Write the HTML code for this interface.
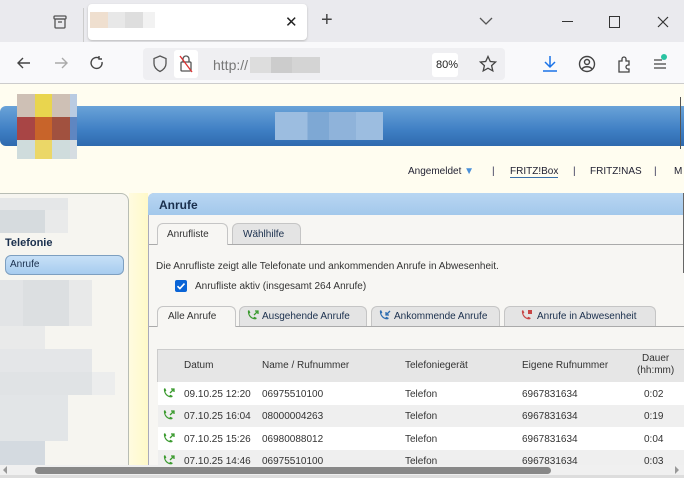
<!DOCTYPE html><html><head><meta charset="utf-8"><style>
*{box-sizing:border-box;margin:0;padding:0}
body{width:684px;height:478px;overflow:hidden;position:relative;font-family:"Liberation Sans",sans-serif;background:#fffdf0}
.a{position:absolute}
.t{font-size:10px;color:#333;white-space:nowrap}
</style></head><body>
<svg width="0" height="0" style="position:absolute"><defs>
<symbol id="ph" viewBox="0 0 14 14"><path d="M2 2.5c0-.8.7-1.3 1.4-1.1l1.3 2.4-1.2 1.3c.7 1.9 2.2 3.5 4.2 4.4l1.3-1.2 2.4 1.3c.2.8-.3 1.4-1.1 1.5C5.6 11.3 2 7.5 2 2.5z" fill="currentColor"/></symbol>
</defs></svg>
<!-- tab bar -->
<div class="a" style="left:0;top:0;width:684px;height:42px;background:#eaeaee"></div>
<div class="a" style="left:83px;top:8px;width:1px;height:34px;background:#ccc"></div>
<svg class="a" style="left:52px;top:14px" width="16" height="16" viewBox="0 0 16 16" fill="none" stroke="#555" stroke-width="1.3"><rect x="2" y="2" width="12" height="3" rx="1"/><rect x="3" y="5" width="10" height="9" rx="1"/><path d="M6 8h4"/></svg>
<div class="a" style="left:88px;top:4px;width:219px;height:36px;background:#fff;border-radius:4px;box-shadow:0 1px 2px #bbb"></div>
<div class="a" style="left:90px;top:12px;width:18px;height:16px;background:#efdfcf"></div>
<div class="a" style="left:108px;top:12px;width:17px;height:16px;background:#e8e8e8"></div>
<div class="a" style="left:125px;top:12px;width:18px;height:16px;background:#dedede"></div>
<div class="a" style="left:143px;top:12px;width:12px;height:16px;background:#f2f2f2"></div>
<div class="a t" style="left:285px;top:13px;font-size:15px;color:#222">✕</div>
<div class="a t" style="left:321px;top:9px;font-size:20px;color:#444">+</div>
<svg class="a" style="left:479px;top:16px" width="14" height="10"><path d="M1 2l6 6 6-6" stroke="#555" fill="none" stroke-width="1.3"/></svg>
<div class="a" style="left:562px;top:21px;width:11px;height:1px;background:#333"></div>
<div class="a" style="left:609px;top:16px;width:11px;height:12px;border:1.2px solid #333"></div>
<svg class="a" style="left:657px;top:16px" width="12" height="12"><path d="M1 1l10 10M11 1L1 11" stroke="#333" stroke-width="1.2"/></svg>
<!-- nav bar -->
<div class="a" style="left:0;top:42px;width:684px;height:42px;background:#f9f9fb;border-bottom:1px solid #ccc"></div>
<svg class="a" style="left:16px;top:55px" width="16" height="16" fill="none" stroke="#444" stroke-width="1.4"><path d="M14 8H2M7 3L2 8l5 5"/></svg>
<svg class="a" style="left:53px;top:55px" width="16" height="16" fill="none" stroke="#aaa" stroke-width="1.4"><path d="M2 8h12M9 3l5 5-5 5"/></svg>
<svg class="a" style="left:89px;top:55px" width="16" height="16" fill="none" stroke="#444" stroke-width="1.4"><path d="M13 7A5.5 5.5 0 1 1 10 3M10 1v3h3"/></svg>
<div class="a" style="left:143px;top:48px;width:362px;height:32px;background:#efeff2;border-radius:4px"></div>
<svg class="a" style="left:152px;top:55px" width="16" height="18" fill="none" stroke="#555" stroke-width="1.3"><path d="M8 1L2 3.5v5c0 4 3 6.5 6 8 3-1.5 6-4 6-8v-5z"/></svg>
<div class="a" style="left:174px;top:50px;width:24px;height:28px;background:#fff;border-radius:3px"></div>
<svg class="a" style="left:178px;top:54px" width="16" height="20" fill="none" stroke="#555" stroke-width="1.3"><rect x="3" y="8" width="10" height="9" rx="1"/><path d="M5 8V5a3 3 0 0 1 6 0v3"/><path d="M2 2l12 16" stroke="#d33"/></svg>
<div class="a t" style="left:213px;top:57px;font-size:14px;color:#777">http://</div>
<div class="a" style="left:250px;top:57px;width:70px;height:16px;background:linear-gradient(90deg,#ddd 0 30%,#ccc 30% 60%,#d4d4d4 60%)"></div>
<div class="a" style="left:432px;top:53px;width:26px;height:24px;background:#fff;border-radius:3px"></div>
<div class="a t" style="left:436px;top:59px;font-size:11px;color:#222">80%</div>
<svg class="a" style="left:479px;top:55px" width="18" height="18" fill="none" stroke="#444" stroke-width="1.3"><path d="M9 1.5l2.3 5 5.3.5-4 3.6 1.2 5.3L9 13.2 4.2 15.9l1.2-5.3-4-3.6 5.3-.5z"/></svg>
<svg class="a" style="left:541px;top:54px" width="18" height="20" fill="none" stroke="#1a73e8" stroke-width="1.5"><path d="M9 2v11M4 8l5 5 5-5M2 17h14"/></svg>
<svg class="a" style="left:578px;top:55px" width="18" height="18" fill="none" stroke="#444" stroke-width="1.4"><circle cx="9" cy="9" r="7.5"/><circle cx="9" cy="7" r="2.5"/><path d="M4 14c2-3 8-3 10 0"/></svg>
<svg class="a" style="left:616px;top:55px" width="16" height="18" fill="none" stroke="#444" stroke-width="1.3"><path d="M3 6h3V4a2 2 0 0 1 4 0v2h3v4h-1a2 2 0 0 0 0 4h1v3H3z"/></svg>
<svg class="a" style="left:652px;top:55px" width="18" height="16" fill="none" stroke="#444" stroke-width="1.3"><path d="M2 5h8M2 9h12M2 13h12"/></svg>
<div class="a" style="left:661px;top:54px;width:6px;height:6px;border-radius:50%;background:#2ac3a2"></div>
<!-- banner -->
<div class="a" style="left:0;top:106px;width:684px;height:40px;background:linear-gradient(#6aa3d8,#3f7fc4 60%,#2f6aae);border-radius:6px 0 0 6px"></div>
<div class="a" style="left:275px;top:112px;width:108px;height:28px;background:linear-gradient(90deg,#9cbde0 0 30%,#7ea8d4 30% 50%,#8fb3da 50% 75%,#9cbde0 75%)"></div>
<div class="a" style="left:17px;top:94px;width:60px;height:65px;display:grid;grid-template-columns:18px 17px 18px 7px;grid-template-rows:23px 23px 19px">
<div style="background:#cec0b5"></div><div style="background:#e9d54e"></div><div style="background:#cec0b5"></div><div style="background:#b9cbe2"></div>
<div style="background:#a84545"></div><div style="background:#c8642a"></div><div style="background:#a1513f"></div><div style="background:#5f86c1"></div>
<div style="background:#cfdcdc"></div><div style="background:#ebd767"></div><div style="background:#cfdcdc"></div><div style="background:#d6dde2"></div></div>
<div class="a" style="left:680px;top:97px;width:1px;height:52px;background:#555"></div>
<div class="a t" style="left:408px;top:166px;font-size:10px;color:#223">Angemeldet <span style="color:#4a90d9">▼</span></div>
<div class="a t" style="left:492px;top:166px;color:#335">|</div>
<div class="a t" style="left:510px;top:166px;color:#223;border-bottom:1px solid #3a6fa8">FRITZ!Box</div>
<div class="a t" style="left:573px;top:166px;color:#335">|</div>
<div class="a t" style="left:590px;top:166px;color:#223">FRITZ!NAS</div>
<div class="a t" style="left:654px;top:166px;color:#335">|</div>
<div class="a t" style="left:674px;top:166px;color:#223">M</div>
<!-- sidebar -->
<div class="a" style="left:129px;top:193px;width:19px;height:273px;background:linear-gradient(90deg,#fffbe0,#fff9c8)"></div>
<div class="a" style="left:-4px;top:193px;width:133px;height:285px;background:#f6f5f0;border:1px solid #b8bdb4;border-radius:0 8px 0 0"></div>
<div class="a" style="left:0;top:198px;width:68px;height:12px;background:#e5e7e8"></div>
<div class="a" style="left:0;top:210px;width:45px;height:23px;background:#d6dbde"></div>
<div class="a" style="left:45px;top:210px;width:23px;height:23px;background:#e9eaea"></div>
<div class="a t" style="left:5px;top:237px;font-size:11px;font-weight:bold;color:#1a2f4d">Telefonie</div>
<div class="a" style="left:5px;top:255px;width:119px;height:20px;background:linear-gradient(#c7e0f7,#a7ccef);border:1px solid #7d9fc0;border-radius:6px"></div>
<div class="a t" style="left:10px;top:259px;color:#1a2f4d">Anrufe</div>
<div class="a" style="left:0;top:280px;width:92px;height:46px;background:linear-gradient(90deg,#e2e4e6 0 25%,#dcdfe1 25% 75%,#e8e9e9 75%)"></div>
<div class="a" style="left:0;top:326px;width:45px;height:23px;background:#e9eaea"></div>
<div class="a" style="left:0;top:349px;width:92px;height:23px;background:#e4e6e8"></div>
<div class="a" style="left:0;top:372px;width:115px;height:23px;background:linear-gradient(90deg,#e0e3e5 0 80%,#eceded 80%)"></div>
<div class="a" style="left:0;top:395px;width:68px;height:46px;background:#e2e5e7"></div>
<div class="a" style="left:0;top:441px;width:45px;height:24px;background:#d4dae0"></div>
<!-- main panel -->
<div class="a" style="left:148px;top:193px;width:540px;height:280px;background:#f7f6f3;border:1px solid #aab;border-radius:6px 0 0 0"></div>
<div class="a" style="left:148px;top:193px;width:536px;height:22px;background:linear-gradient(#b8d6f2,#a3c8eb);border-radius:6px 0 0 0"></div>
<div class="a t" style="left:159px;top:198px;font-size:12px;font-weight:bold;color:#1a2f4d">Anrufe</div>
<div class="a" style="left:149px;top:244px;width:535px;height:1px;background:#aaa"></div>
<div class="a" style="left:157px;top:223px;width:71px;height:22px;background:#f7f6f3;border:1px solid #c5c5c5;border-bottom:none;border-radius:6px 6px 0 0"></div>
<div class="a t" style="left:167px;top:229px;color:#333">Anrufliste</div>
<div class="a" style="left:232px;top:223px;width:69px;height:21px;background:#e4e4e4;border:1px solid #c5c5c5;border-bottom:none;border-radius:6px 6px 0 0"></div>
<div class="a t" style="left:243px;top:229px;color:#1a2f4d">Wählhilfe</div>
<div class="a t" style="left:156px;top:261px;color:#333">Die Anrufliste zeigt alle Telefonate und ankommenden Anrufe in Abwesenheit.</div>
<div class="a" style="left:175px;top:280px;width:12px;height:12px;background:#0a64d6;border-radius:2px"></div>
<svg class="a" style="left:175px;top:280px" width="12" height="12"><path d="M2.5 6.2l2.4 2.4 4.6-5" stroke="#fff" stroke-width="1.6" fill="none"/></svg>
<div class="a t" style="left:195px;top:281px;color:#333">Anrufliste aktiv (insgesamt 264 Anrufe)</div>
<div class="a" style="left:149px;top:326px;width:535px;height:1px;background:#aaa"></div>
<div class="a" style="left:157px;top:306px;width:79px;height:21px;background:#f7f6f3;border:1px solid #c5c5c5;border-bottom:none;border-radius:6px 6px 0 0"></div>
<div class="a t" style="left:168px;top:311px;color:#333">Alle Anrufe</div>
<div class="a" style="left:239px;top:306px;width:128px;height:20px;background:#e4e4e4;border:1px solid #c5c5c5;border-bottom:none;border-radius:6px 6px 0 0"></div>
<svg class="a" style="left:246px;top:309px;color:#3a9a2e" width="13" height="13"><use href="#ph"/><path d="M8 6l4-4M9 2h3v3" stroke="#3a9a2e" stroke-width="1.3" fill="none"/></svg>
<div class="a t" style="left:262px;top:311px;color:#1a2f4d">Ausgehende Anrufe</div>
<div class="a" style="left:371px;top:306px;width:129px;height:20px;background:#e4e4e4;border:1px solid #c5c5c5;border-bottom:none;border-radius:6px 6px 0 0"></div>
<svg class="a" style="left:378px;top:309px;color:#2c6cb0" width="13" height="13"><use href="#ph"/><path d="M12 2L8 6M8 3v3h3" stroke="#2c6cb0" stroke-width="1.3" fill="none"/></svg>
<div class="a t" style="left:394px;top:311px;color:#1a2f4d">Ankommende Anrufe</div>
<div class="a" style="left:504px;top:306px;width:152px;height:20px;background:#e4e4e4;border:1px solid #c5c5c5;border-bottom:none;border-radius:6px 6px 0 0"></div>
<svg class="a" style="left:520px;top:309px;color:#c84545" width="13" height="13"><use href="#ph"/><rect x="8" y="1" width="4" height="4" fill="#c84545"/></svg>
<div class="a t" style="left:537px;top:311px;color:#1a2f4d">Anrufe in Abwesenheit</div>
<!-- table -->
<div class="a" style="left:157px;top:349px;width:527px;height:33px;background:#e6e6e6;border-top:1px solid #ccc;border-left:1px solid #ccc"></div>
<div class="a t" style="left:184px;top:360px">Datum</div>
<div class="a t" style="left:262px;top:360px">Name / Rufnummer</div>
<div class="a t" style="left:405px;top:360px">Telefoniegerät</div>
<div class="a t" style="left:522px;top:360px">Eigene Rufnummer</div>
<div class="a t" style="left:637px;top:353px;text-align:center;line-height:12px">Dauer<br>(hh:mm)</div>
<div class="a" style="left:158px;top:382px;width:526px;height:23px;background:#fff"></div>
<div class="a" style="left:158px;top:405px;width:526px;height:22px;background:#efefef"></div>
<div class="a" style="left:158px;top:427px;width:526px;height:23px;background:#fff"></div>
<div class="a" style="left:158px;top:450px;width:526px;height:16px;background:#efefef"></div>
<svg class="a" style="left:162px;top:387px;color:#3a9a2e" width="13" height="13"><use href="#ph"/><path d="M8 6l4-4M9 2h3v3" stroke="#3a9a2e" stroke-width="1.3" fill="none"/></svg>
<div class="a t" style="left:184px;top:389px">09.10.25 12:20</div><div class="a t" style="left:262px;top:389px">06975510100</div><div class="a t" style="left:405px;top:389px">Telefon</div><div class="a t" style="left:522px;top:389px">6967831634</div><div class="a t" style="left:644px;top:389px">0:02</div>
<svg class="a" style="left:162px;top:409px;color:#3a9a2e" width="13" height="13"><use href="#ph"/><path d="M8 6l4-4M9 2h3v3" stroke="#3a9a2e" stroke-width="1.3" fill="none"/></svg>
<div class="a t" style="left:184px;top:411px">07.10.25 16:04</div><div class="a t" style="left:262px;top:411px">08000004263</div><div class="a t" style="left:405px;top:411px">Telefon</div><div class="a t" style="left:522px;top:411px">6967831634</div><div class="a t" style="left:644px;top:411px">0:19</div>
<svg class="a" style="left:162px;top:432px;color:#3a9a2e" width="13" height="13"><use href="#ph"/><path d="M8 6l4-4M9 2h3v3" stroke="#3a9a2e" stroke-width="1.3" fill="none"/></svg>
<div class="a t" style="left:184px;top:434px">07.10.25 15:26</div><div class="a t" style="left:262px;top:434px">06980088012</div><div class="a t" style="left:405px;top:434px">Telefon</div><div class="a t" style="left:522px;top:434px">6967831634</div><div class="a t" style="left:644px;top:434px">0:04</div>
<svg class="a" style="left:162px;top:454px;color:#3a9a2e" width="13" height="13"><use href="#ph"/><path d="M8 6l4-4M9 2h3v3" stroke="#3a9a2e" stroke-width="1.3" fill="none"/></svg>
<div class="a t" style="left:184px;top:456px">07.10.25 14:46</div><div class="a t" style="left:262px;top:456px">06975510100</div><div class="a t" style="left:405px;top:456px">Telefon</div><div class="a t" style="left:522px;top:456px">6967831634</div><div class="a t" style="left:644px;top:456px">0:03</div>
<div class="a" style="left:683px;top:193px;width:1px;height:80px;background:#666"></div>
<!-- scrollbar -->
<div class="a" style="left:0;top:465px;width:684px;height:13px;background:#f0f0f0;border-bottom:3px solid #ddd"></div>
<div class="a" style="left:35px;top:467px;width:516px;height:7px;background:#888;border-radius:4px"></div>
<div class="a" style="left:3px;top:466px;width:0;height:0;border:4px solid transparent;border-right-color:#999;border-left:none"></div>
<div class="a" style="left:675px;top:466px;width:0;height:0;border:4px solid transparent;border-left-color:#999;border-right:none"></div>
</body></html>
